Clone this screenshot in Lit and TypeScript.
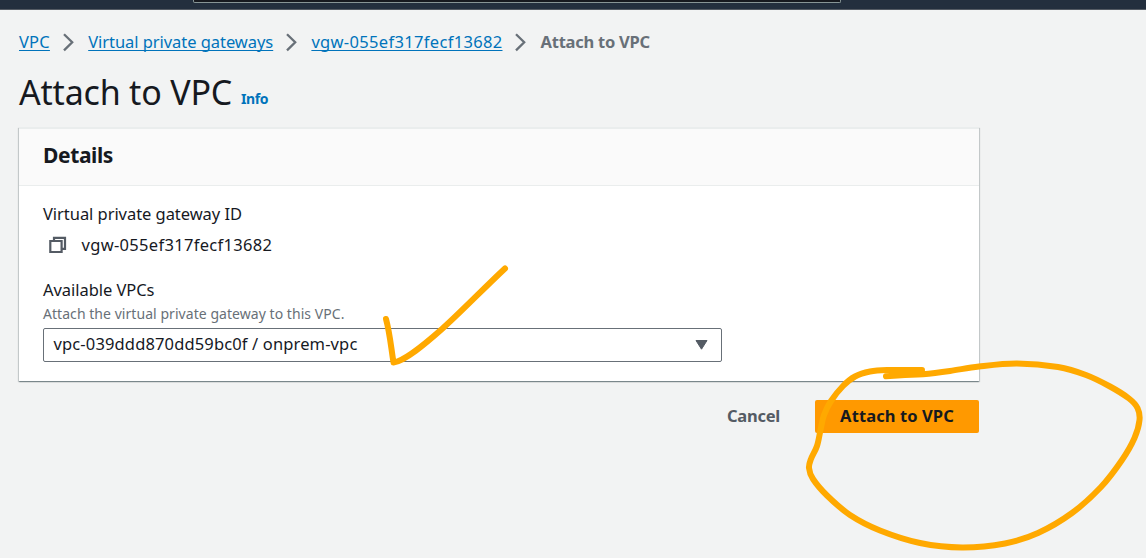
import { LitElement, html, css, svg } from "lit";
import { customElement } from "lit/decorators.js";

type Point = [number, number];

/** Pen stroke around the submit button, as sampled points. */
const LOOP: Point[] = [
  [922, 370], [887, 370], [870, 371.5], [855, 376.5], [843, 386], [831, 401], [824, 415], [820.5, 430],
  [817, 446], [811, 459], [809, 468], [813, 479], [827, 495.5], [850, 515], [880, 530.5], [920, 543],
  [962, 547.5], [1005, 543.5], [1038, 533], [1072, 513], [1101, 487], [1122, 460], [1134.5, 438],
  [1139.5, 420], [1137.500, 408], [1129, 398.5], [1110, 386.5], [1086, 375], [1058, 367], [1017, 363.500],
  [979, 366.5], [950, 371], [923, 374.2], [905, 375], [886, 376.2],
];

/** Smooth cubic path through every point. */
function smooth(p: Point[]): string {
  let d = `M${p[0]}`;
  for (let i = 0; i < p.length - 1; i++) {
    const a = p[i - 1] ?? p[i];
    const b = p[i];
    const c = p[i + 1];
    const e = p[i + 2] ?? c;
    d += `C${b[0] + (c[0] - a[0]) / 6} ${b[1] + (c[1] - a[1]) / 6} ${c[0] - (e[0] - b[0]) / 6} ${c[1] - (e[1] - b[1]) / 6} ${c[0]} ${c[1]}`;
  }
  return d;
}

@customElement("app-root")
export class AppRoot extends LitElement {
  static styles = css`
    :host {
      display: block;
      position: relative;
      box-sizing: border-box;
      height: 558px;
      overflow: hidden;
      background: #f2f3f3;
      color: #16191f;
      font: 16.5px/22px "Noto Sans", "Open Sans", sans-serif;
      white-space: nowrap;
    }
    * { box-sizing: border-box; }
    .topbar {
      height: 10px;
      background: #232f3e;
      border-bottom: 1px solid #545b64;
      padding-left: 193px;
    }
    .search {
      width: 648px;
      height: 3px;
      background: #16191f;
      border: 1px solid #879596;
      border-top: 0;
      border-radius: 0 0 2px 2px;
    }
    main { width: 979px; padding: 21px 0 0 19px; }
    .crumbs { display: flex; align-items: center; height: 22px; }
    .crumbs a {
      color: #0073bb;
      text-decoration: underline;
      text-decoration-thickness: 1px;
      text-underline-offset: 2px;
      text-decoration-skip-ink: none;
    }
    .crumbs .vpc { width: 31px; letter-spacing: 0.2px; }
    .crumbs .list { width: 185px; letter-spacing: -0.05px; }
    .crumbs .gateway { width: 191px; letter-spacing: 0.33px; }
    .crumbs svg { flex: none; width: 12px; height: 20px; margin: 0 13.2px 0 13px; }
    .crumbs .current { color: #687078; font-weight: 700; letter-spacing: -0.25px; }
    .heading { display: flex; align-items: baseline; height: 44px; margin-top: 17px; }
    h1 { margin: 0; font-size: 34px; line-height: 44px; font-weight: 400; letter-spacing: -0.2px; }
    .info { position: relative; top: -1px; margin-left: 9px; color: #0073bb; font-size: 14px; font-weight: 700; letter-spacing: -0.4px; }
    .card {
      margin-top: 13px;
      height: 254px;
      background: #fff;
      box-shadow: 0 1px 1px rgba(0, 28, 36, 0.3), 1px 1px 1px rgba(0, 28, 36, 0.15), -1px 1px 1px rgba(0, 28, 36, 0.15);
      border-top: 2px solid #eaeded;
    }
    .card header {
      height: 57px;
      padding: 11px 24px;
      background: #fafafa;
      border-bottom: 1px solid #eaeded;
    }
    h2 { margin: 0; font-size: 21px; line-height: 30px; font-weight: 700; letter-spacing: -0.38px; }
    .body { padding: 17px 24px 0; }
    .label { letter-spacing: -0.05px; }
    .value { display: flex; align-items: center; margin-top: 9px; letter-spacing: 0.31px; }
    .value svg { width: 18px; height: 18px; margin: 0 14.5px 0 6px; }
    .field { margin-top: 23px; }
    .hint { color: #687078; font-size: 14px; line-height: 22px; margin-top: 2px; letter-spacing: 0.05px; }
    .select {
      display: flex;
      align-items: center;
      justify-content: space-between;
      width: 679px;
      height: 34px;
      margin-top: 3px;
      padding: 0 13px 2px 9.5px;
      border: 1px solid #687078;
      border-radius: 2px;
      letter-spacing: 0.14px;
    }
    .select svg { width: 13px; height: 11px; }
    .actions { display: flex; justify-content: flex-end; align-items: center; margin-top: 19px; font-weight: 700; }
    .cancel { color: #545b64; letter-spacing: -0.25px; margin-right: 35px; padding-bottom: 1px; }
    .submit {
      width: 164px;
      height: 33px;
      padding-bottom: 1px;
      border-radius: 2px;
      background: #ff9900;
      display: flex;
      align-items: center;
      justify-content: center;
      letter-spacing: 0.1px;
    }
    .ink { position: absolute; inset: 0; width: 1146px; height: 558px; pointer-events: none; }
  `;

  private chevron() {
    return html`<svg viewBox="0 0 12 20" fill="none" stroke="#687078" stroke-width="2.3">
      ${svg`<path d="M1 2.200 9.200 10.300 1 18.400" />`}
    </svg>`;
  }

  render() {
    return html`
      <div class="topbar"><div class="search"></div></div>
      <main>
        <nav class="crumbs">
          <a class="vpc">VPC</a>${this.chevron()}
          <a class="list">Virtual private gateways</a>${this.chevron()}
          <a class="gateway">vgw-055ef317fecf13682</a>${this.chevron()}
          <span class="current">Attach to VPC</span>
        </nav>
        <div class="heading"><h1>Attach to VPC</h1><a class="info">Info</a></div>
        <section class="card">
          <header><h2>Details</h2></header>
          <div class="body">
            <div class="label">Virtual private gateway ID</div>
            <div class="value">
              <svg viewBox="0 0 18 18" fill="none" stroke="#545b64" stroke-width="2.2">
                <path d="M5 5V1.800H16V12.800H13" />
                <path d="M1.300 5H12.600V16H1.300Z" />
              </svg>
              <span>vgw-055ef317fecf13682</span>
            </div>
            <div class="field">
              <div class="label">Available VPCs</div>
              <div class="hint">Attach the virtual private gateway to this VPC.</div>
              <div class="select">
                <span>vpc-039ddd870dd59bc0f / onprem-vpc</span>
                <svg viewBox="0 0 13 11" fill="#545b64" stroke="#545b64" stroke-linejoin="round">
                  <path d="M1 1.500H12L6.500 10.200Z" />
                </svg>
              </div>
            </div>
          </div>
        </section>
        <div class="actions">
          <span class="cancel">Cancel</span>
          <span class="submit">Attach to VPC</span>
        </div>
      </main>
      <svg class="ink" viewBox="0 0 1146 558" fill="none" stroke="#ffa900" stroke-width="6" stroke-linecap="round" stroke-linejoin="round">
        <path d="M386 319C390 334 391 347 393.500 362.500C405 361 425 344 442 329C460 313 483 289 505 268.500" />
        <path d=${smooth(LOOP)} />
      </svg>
    `;
  }
}
